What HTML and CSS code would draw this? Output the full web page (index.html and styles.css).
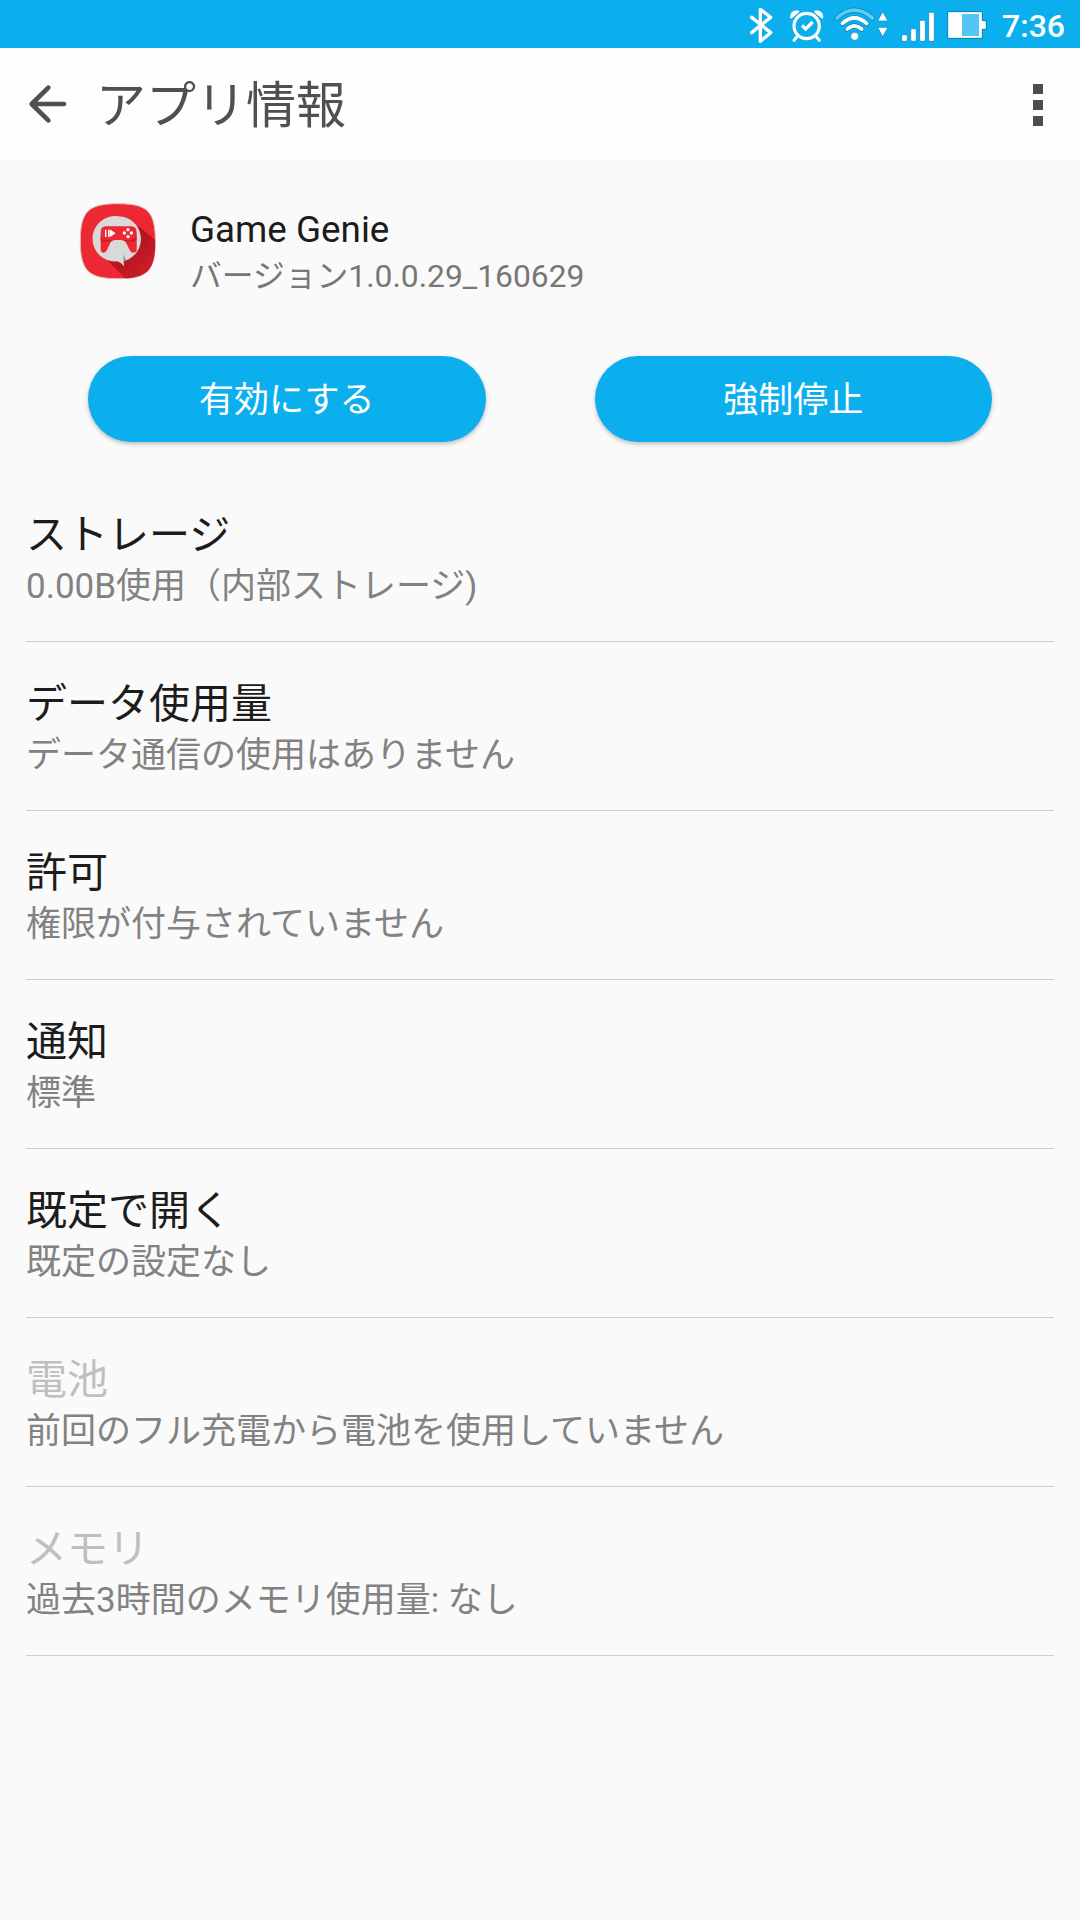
FILE: index.html
```html
<!DOCTYPE html>
<html lang="ja">
<head>
<meta charset="utf-8">
<title>アプリ情報</title>
<link rel="stylesheet" href="styles.css">
</head>
<body>
<div class="status-bar">
  <svg class="bluetooth" width="26" height="48" viewBox="54 0 78 144"><path d="M65 52L122 98L91 124V28L122 52L65 98" fill="none" stroke="#fff" stroke-width="10" stroke-linejoin="round" stroke-linecap="round"/></svg>
  <svg class="alarm" width="37" height="48" viewBox="174 0 111 144">
    <circle cx="230" cy="78" r="38" fill="none" stroke="#fff" stroke-width="9.500"/>
    <path d="M216 76L227 87L248 66" fill="none" stroke="#fff" stroke-width="10"/>
    <path d="M203 108L192 121M257 108L268 121" stroke="#fff" stroke-width="9" stroke-linecap="round"/>
    <path d="M180 53Q180 31 203 31L209 35L184 56ZM280 53Q280 31 257 31L251 35L276 56Z" fill="#fff"/>
  </svg>
  <svg class="wifi" width="57" height="48" viewBox="309 0 171 144">
    <g fill="none" stroke-linecap="round">
      <path d="M321 54Q373 7 427 54" stroke="#0781b5" stroke-width="15"/>
      <path d="M321 54Q373 7 427 54" stroke="#5ccbf5" stroke-width="11"/>
      <path d="M337 70Q373 38 410 70M352 87Q373 68 395 87" stroke="#0781b5" stroke-width="15"/>
      <path d="M337 70Q373 38 410 70M352 87Q373 68 395 87" stroke="#fff" stroke-width="11"/>
    </g>
    <circle cx="374" cy="109" r="12" fill="#fff" stroke="#0781b5" stroke-width="2"/>
    <path d="M458 35L474 63H443ZM443 82H474L458 110Z" fill="#fff" stroke="#0781b5" stroke-width="2" stroke-linejoin="round"/>
  </svg>
  <svg class="signal" width="36" height="48" viewBox="30 0 108 144"><g fill="#fff" stroke="#0781b5" stroke-width="2"><rect x="35" y="104" width="17" height="20" rx="4"/><rect x="62" y="86" width="17" height="38" rx="4"/><rect x="89" y="61" width="17" height="63" rx="4"/><rect x="116" y="37" width="17" height="87" rx="4"/></g></svg>
  <svg class="battery" width="42" height="48" viewBox="168 0 126 144"><path d="M173 35H277V62H289V88H277V115H173Z" fill="#fff" stroke="#0781b5" stroke-width="3"/><path d="M216 42H267V108H216Z" fill="#55c6f3"/></svg>
  <span class="clock">7:36</span>
</div>
<header class="app-bar">
  <svg class="back" width="40" height="40" viewBox="84 132 120 120"><path d="M145 143L95 192L145 241M96 192H192" fill="none" stroke="#505050" stroke-width="14" stroke-linecap="round" stroke-linejoin="round"/></svg>
  <h1 class="page-title">アプリ情報</h1>
  <svg class="more" width="10" height="42" viewBox="0 0 10 42" fill="#4e4e4e"><path d="M0 0H10V10H0ZM0 16H10V26H0ZM0 32H10V42H0Z"/></svg>
</header>
<main>
  <section class="app-summary">
    <svg class="app-icon" width="80" height="81" viewBox="54 60 240 243">
      <defs>
        <linearGradient id="shade" x1="170" y1="180" x2="270" y2="280" gradientUnits="userSpaceOnUse"><stop offset="0" stop-color="#a80f1b"/><stop offset="1" stop-color="#d01e2b"/></linearGradient>
        <clipPath id="tile"><path d="M174 71C262 71 286 94 286 183C286 272 262 296 174 296C85 296 61 272 61 183C61 94 85 71 174 71Z"/></clipPath>
      </defs>
      <path d="M174 71C262 71 286 94 286 183C286 272 262 296 174 296C85 296 61 272 61 183C61 94 85 71 174 71Z" fill="#ee2833" stroke="#dfbcbc" stroke-width="3"/>
      <g clip-path="url(#tile)">
        <path d="M126 224L200 300H300V192L236 139Z" fill="url(#shade)"/>
      </g>
      <path d="M175 109A68 68 0 1 0 172 244Q183 247 192 259L191 243A68 68 0 0 0 175 109Z" fill="#d8d9d8"/>
      <path d="M190 223L198 240L191 244Z" fill="#909492"/>
      <path d="M137 139H213Q230 139 230 158V211Q230 218 218 218Q212 218 209 210L197 186Q192 180 184 180H164Q156 180 152 186L141 210Q138 218 131 218Q122 218 122 211V158Q122 139 137 139Z" fill="#ed2733"/>
      <path d="M122 165V177Q123 185 132 185H151Q155 180 164 180H184Q192 180 198 185H221Q229 184 230 177V165Q229 180 213 180H137Q122 179 122 165Z" fill="#c91c28"/>
      <path d="M135 149H139V171H135ZM144 149H148V171H144ZM149 148L167 160L149 172Z" fill="#fff"/>
      <g fill="#fff"><circle cx="204" cy="149" r="5"/><circle cx="193" cy="159" r="5"/><circle cx="214" cy="159" r="5"/><circle cx="204" cy="170" r="5"/></g>
    </svg>
    <div class="app-text">
      <div class="app-name">Game Genie</div>
      <div class="app-version">バージョン1.0.0.29_160629</div>
    </div>
  </section>
  <div class="actions">
    <button class="action">有効にする</button>
    <button class="action">強制停止</button>
  </div>
  <ul class="settings">
    <li class="row"><div class="label">ストレージ</div><div class="detail">0.00B使用（内部ストレージ)</div></li>
    <li class="row"><div class="label">データ使用量</div><div class="detail">データ通信の使用はありません</div></li>
    <li class="row"><div class="label">許可</div><div class="detail">権限が付与されていません</div></li>
    <li class="row"><div class="label">通知</div><div class="detail">標準</div></li>
    <li class="row"><div class="label">既定で開く</div><div class="detail">既定の設定なし</div></li>
    <li class="row disabled"><div class="label">電池</div><div class="detail">前回のフル充電から電池を使用していません</div></li>
    <li class="row disabled"><div class="label">メモリ</div><div class="detail">過去3時間のメモリ使用量: なし</div></li>
  </ul>
</main>
</body>
</html>
```
FILE: styles.css
```css
* { box-sizing: border-box; }
body {
  margin: 0;
  min-height: 1920px;
  background: #fafafa;
  color: #1c1c1c;
  font-family: Roboto, "Noto Sans CJK JP", sans-serif;
  white-space: nowrap;
}
svg { display: block; flex: none; }
.status-bar {
  display: flex;
  align-items: center;
  height: 48px;
  padding-left: 748px;
  background: #0cafee;
}
.alarm { margin-left: 14px; }
.wifi { margin-left: 8px; }
.signal, .battery { margin-left: 10px; }
.clock {
  margin-left: 14px;
  padding-top: 4px;
  color: #fff;
  font-size: 32px;
  font-weight: 500;
  line-height: 44px;
}
.app-bar {
  display: flex;
  align-items: center;
  height: 112px;
  padding: 0 37px 0 28px;
  background: #fefefe;
}
.page-title {
  flex: 1;
  margin: 0 0 0 28px;
  padding-top: 4px;
  color: #505050;
  font-size: 50px;
  font-weight: 400;
  line-height: 60px;
}
.more { margin-top: 1px; }
.app-summary {
  display: flex;
  height: 196px;
  padding: 40px 0 0 78px;
}
.app-text { padding: 6px 0 0 32px; }
.app-name { font-size: 36.800px; line-height: 48px; }
.app-version { color: #777; font-size: 31.800px; line-height: 44px; }
.actions {
  display: flex;
  justify-content: space-between;
  height: 117px;
  padding: 0 88px;
}
.action {
  width: 397.500px;
  height: 86px;
  padding: 4px 0 0;
  border: 0;
  border-radius: 43px;
  background: #0cafee;
  box-shadow: 0 2px 4px rgba(0, 0, 0, .25);
  color: #fff;
  font: inherit;
  font-size: 35px;
  line-height: 82px;
}
.settings {
  margin: 0;
  padding: 0 26px;
  list-style: none;
}
.row {
  height: 169px;
  padding-top: 38px;
  border-bottom: 1px solid #cecece;
}
.label { font-size: 41px; line-height: 48px; }
.detail {
  margin-top: 6px;
  color: #828282;
  font-size: 35px;
  line-height: 44px;
}
.disabled .label { color: #bfbfbf; }
```
